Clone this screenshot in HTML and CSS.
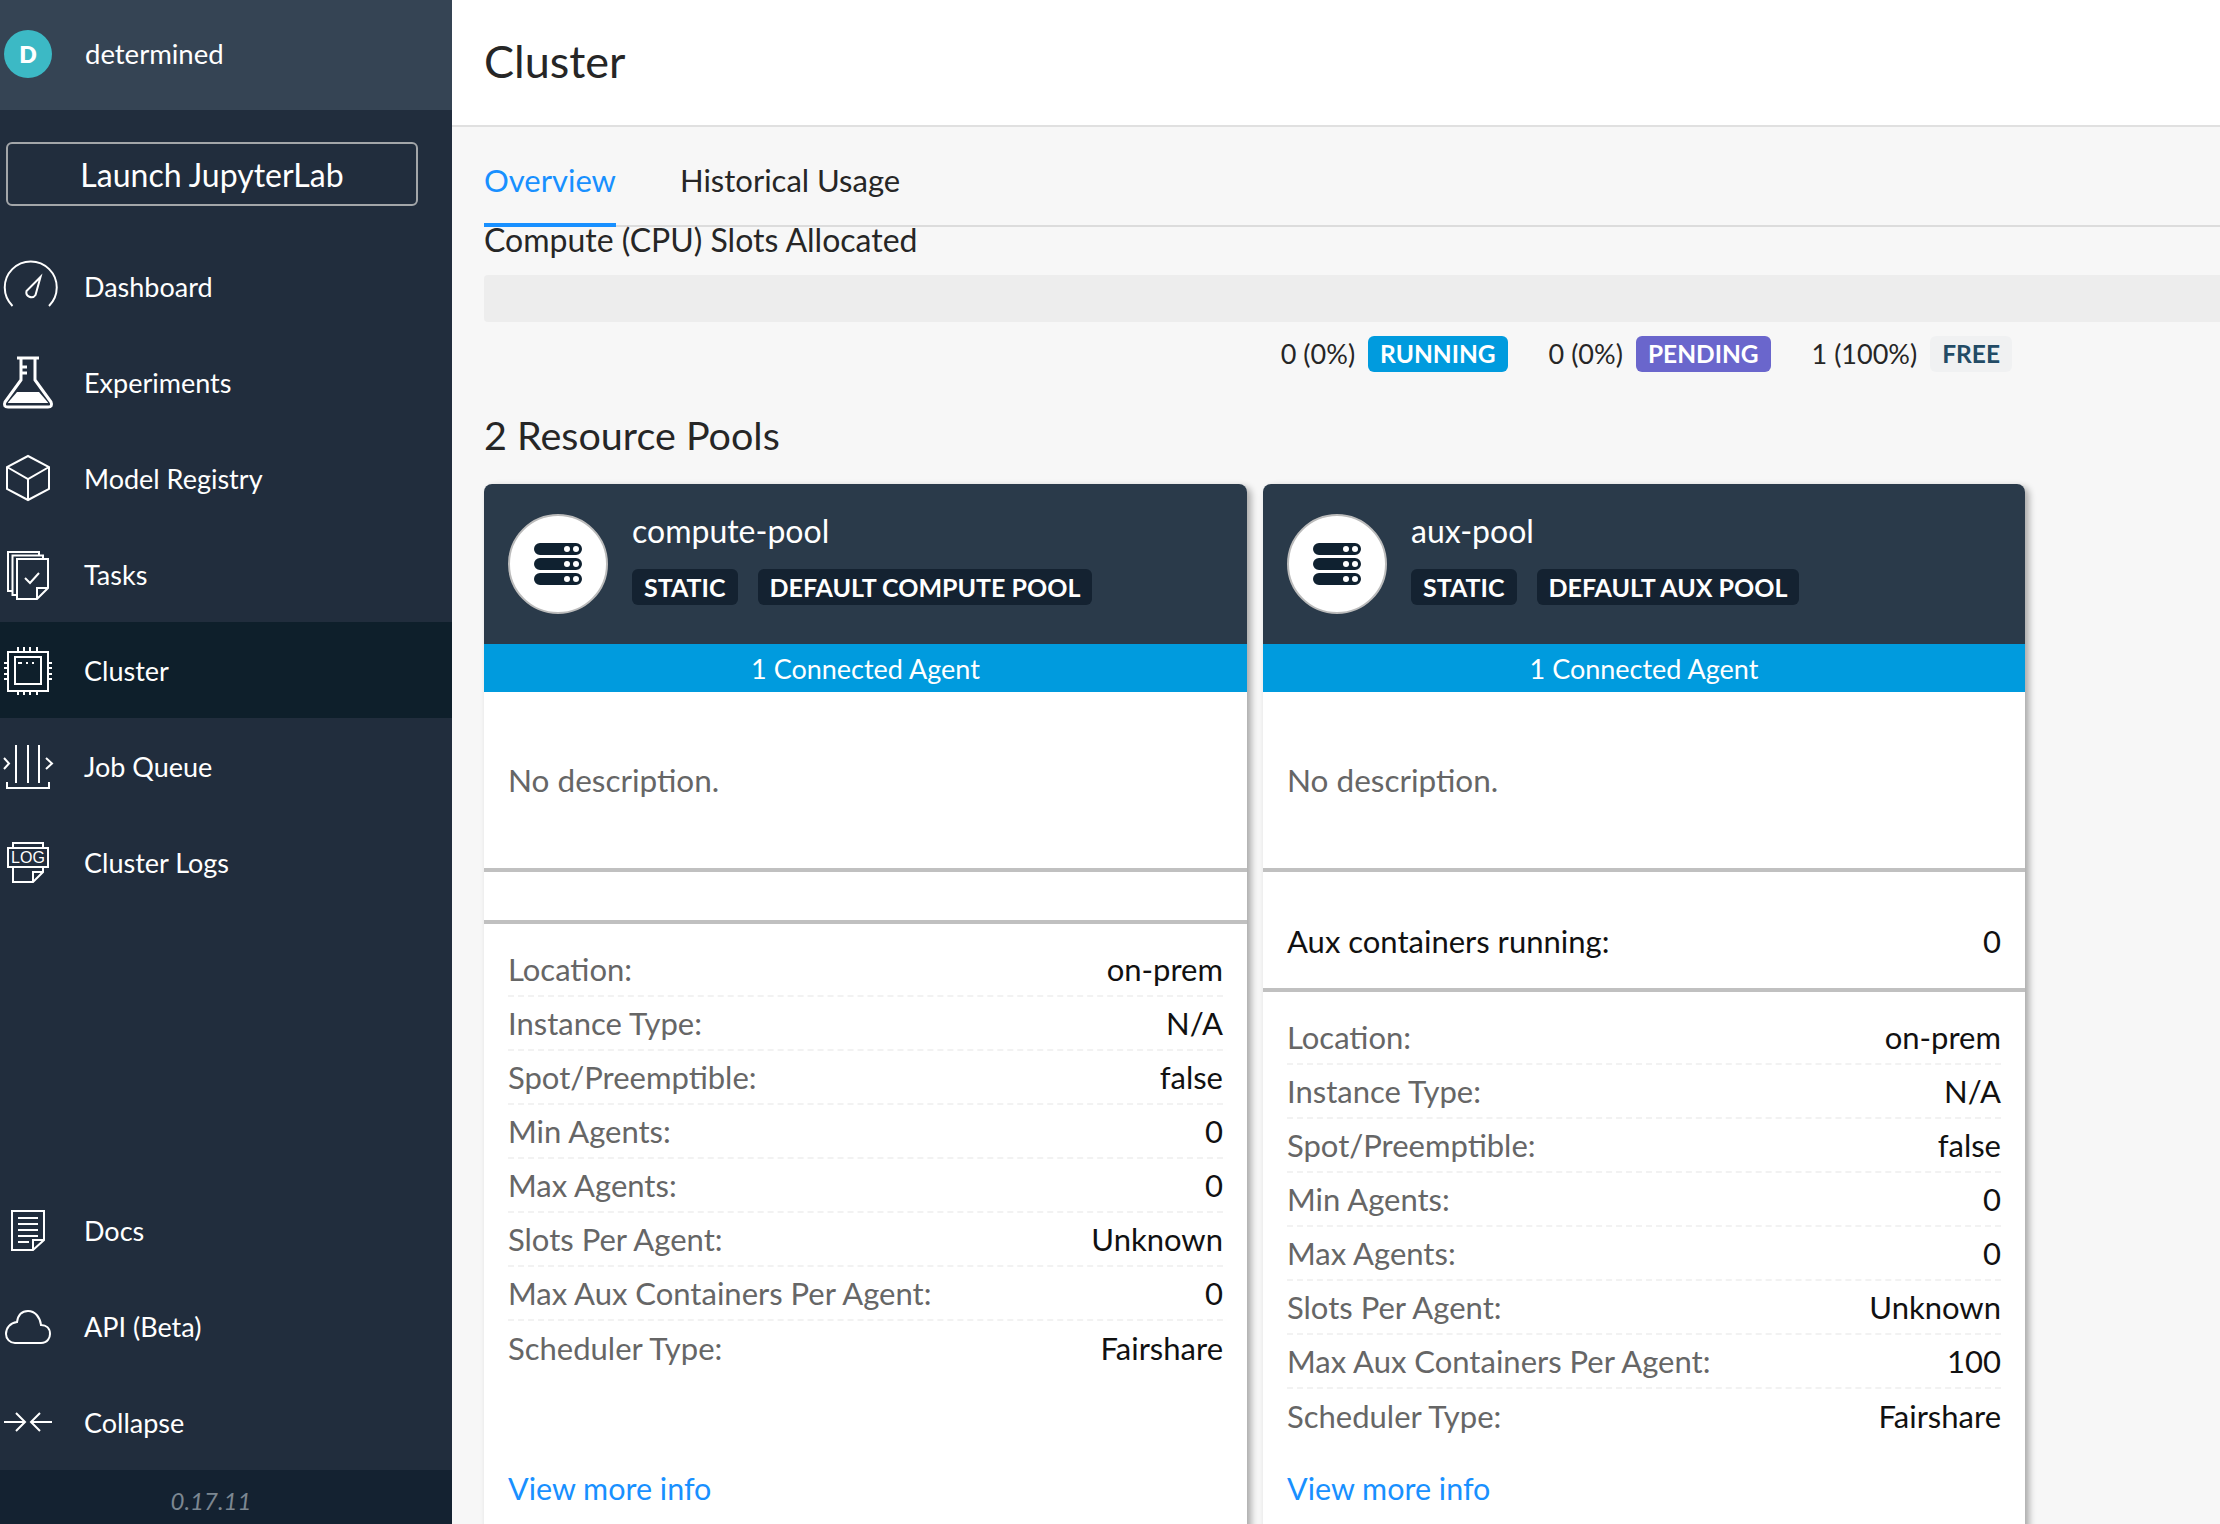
FILE: index.html
```html
<!DOCTYPE html>
<html lang="en">
<head>
    <meta charset="UTF-8">
    <title>Cluster</title>
    <link rel="stylesheet" href="styles.css">
</head>
<body>
<div class="app">
    <aside class="side">
        <div class="user"><span class="avatar">D</span><span>determined</span></div>
        <div class="launch">Launch JupyterLab</div>
        <nav class="nav">
            <a class="item"><svg viewBox="0 0 54 54"><path d="M10.500 47A26 26 0 1 1 47 47"/><path d="M38.500 18L33.500 36A5 5 0 0 1 24.500 32Z"/></svg>Dashboard</a>
            <a class="item"><svg viewBox="0 0 54 54"><path class="thick" d="M15 3H37M19 3V25L3 47Q1 52 6 52H46Q51 52 49 47L33 25V3M19 12H25M19 18H25"/><path class="solid" d="M15 37H37L46 47.500Q46 48 45 48H7Q6 48 6 47.500Z"/></svg>Experiments</a>
            <a class="item"><svg viewBox="0 0 54 54"><path d="M26 5L47 16V38L26 49L5 38V16ZM5 16L26 28L47 16M26 28V49"/></svg>Model Registry</a>
            <a class="item"><svg viewBox="0 0 54 54"><path d="M37 8V5H6V44H10M41 12V8.500H10.500V48H15"/><path d="M15 12H46V41L35 52H15ZM46 41H35V52M23 31L28 36L37 26"/></svg>Tasks</a>
            <a class="item active"><svg viewBox="0 0 54 54"><path d="M6 9H46V48H6ZM13 14H39V41H13ZM2 20H6M2 25H6M2 31H6M2 36H6M46 20H50M46 25H50M46 31H50M46 36H50M16 4V9M22 4V9M28 4V9M35 4V9M16 48V52M22 48V52M28 48V52M35 48V52M16 20H20M24 20H26M30 20H32"/></svg>Cluster</a>
            <a class="item"><svg viewBox="0 0 54 54"><path d="M14 6V44M26 6V44M37 6V44M5 43V49H47V43M2 19L7 24.500L2 30M44 19L50 24.500L44 30"/></svg>Job Queue</a>
            <a class="item"><svg viewBox="0 0 54 54"><path d="M11 13V8H41V13M6 13H46V32H6ZM11 32V47H31L41 37V32M41 37H31V47"/><text x="26" y="28" class="logtxt">LOG</text></svg>Cluster Logs</a>
            <div class="grow"></div>
            <a class="item"><svg viewBox="0 0 54 54"><path d="M10 8H42V37L31 47H10ZM42 37H31V47M16 15H36M16 21H36M16 27H36M16 33H36M16 39H27"/></svg>Docs</a>
            <a class="item"><svg viewBox="0 0 54 54"><path d="M13 44H39C46 44 48 38 48 35C48 29 44 26 39 26C38 18 33 12 26 12C20 12 16 16 15 23C8 24 4 29 4 35C4 40 8 44 13 44Z"/></svg>API (Beta)</a>
            <a class="item"><svg viewBox="0 0 54 54"><path d="M2 27H23M14 18L23 27L14 36M50 27H29M38 18L29 27L38 36"/></svg>Collapse</a>
        </nav>
        <div class="version">0.17.11</div>
    </aside>
    <main class="main">
        <header class="top"><h1>Cluster</h1></header>
        <div class="content">
            <div class="tabs">
                <span class="tab on">Overview</span>
                <span class="tab">Historical Usage</span>
            </div>
            <div class="slots">Compute (CPU) Slots Allocated</div>
            <div class="bar"></div>
            <div class="legend">
                <span class="leg">0 (0%)<b class="tag running">RUNNING</b></span>
                <span class="leg">0 (0%)<b class="tag pending">PENDING</b></span>
                <span class="leg">1 (100%)<b class="tag free">FREE</b></span>
            </div>
            <h2>2 Resource Pools</h2>
            <div class="cards">
                <section class="card">
                    <div class="head">
                        <span class="disc"><svg viewBox="0 0 48 42"><path class="server" d="M6 0H42A6 6 0 0 1 42 12H6A6 6 0 0 1 6 0ZM6 15H42A6 6 0 0 1 42 27H6A6 6 0 0 1 6 15ZM6 30H42A6 6 0 0 1 42 42H6A6 6 0 0 1 6 30Z"/><g class="dots"><circle cx="33" cy="6" r="3"/><circle cx="42" cy="6" r="3"/><circle cx="33" cy="21" r="3"/><circle cx="42" cy="21" r="3"/><circle cx="33" cy="36" r="3"/><circle cx="42" cy="36" r="3"/></g></svg></span>
                        <div class="headtext">
                            <div class="pool">compute-pool</div>
                            <div class="pooltags"><b>STATIC</b><b>DEFAULT COMPUTE POOL</b></div>
                        </div>
                    </div>
                    <div class="agents">1 Connected Agent</div>
                    <div class="desc">No description.</div>
                    <div class="aux empty"></div>
                    <dl class="info">
                        <div><dt>Location:</dt><dd>on-prem</dd></div>
                        <div><dt>Instance Type:</dt><dd>N/A</dd></div>
                        <div><dt>Spot/Preemptible:</dt><dd>false</dd></div>
                        <div><dt>Min Agents:</dt><dd>0</dd></div>
                        <div><dt>Max Agents:</dt><dd>0</dd></div>
                        <div><dt>Slots Per Agent:</dt><dd>Unknown</dd></div>
                        <div><dt>Max Aux Containers Per Agent:</dt><dd>0</dd></div>
                        <div><dt>Scheduler Type:</dt><dd>Fairshare</dd></div>
                    </dl>
                    <a class="more">View more info</a>
                </section>
                <section class="card">
                    <div class="head">
                        <span class="disc"><svg viewBox="0 0 48 42"><path class="server" d="M6 0H42A6 6 0 0 1 42 12H6A6 6 0 0 1 6 0ZM6 15H42A6 6 0 0 1 42 27H6A6 6 0 0 1 6 15ZM6 30H42A6 6 0 0 1 42 42H6A6 6 0 0 1 6 30Z"/><g class="dots"><circle cx="33" cy="6" r="3"/><circle cx="42" cy="6" r="3"/><circle cx="33" cy="21" r="3"/><circle cx="42" cy="21" r="3"/><circle cx="33" cy="36" r="3"/><circle cx="42" cy="36" r="3"/></g></svg></span>
                        <div class="headtext">
                            <div class="pool">aux-pool</div>
                            <div class="pooltags"><b>STATIC</b><b>DEFAULT AUX POOL</b></div>
                        </div>
                    </div>
                    <div class="agents">1 Connected Agent</div>
                    <div class="desc">No description.</div>
                    <div class="aux"><span>Aux containers running:</span><span>0</span></div>
                    <dl class="info">
                        <div><dt>Location:</dt><dd>on-prem</dd></div>
                        <div><dt>Instance Type:</dt><dd>N/A</dd></div>
                        <div><dt>Spot/Preemptible:</dt><dd>false</dd></div>
                        <div><dt>Min Agents:</dt><dd>0</dd></div>
                        <div><dt>Max Agents:</dt><dd>0</dd></div>
                        <div><dt>Slots Per Agent:</dt><dd>Unknown</dd></div>
                        <div><dt>Max Aux Containers Per Agent:</dt><dd>100</dd></div>
                        <div><dt>Scheduler Type:</dt><dd>Fairshare</dd></div>
                    </dl>
                    <a class="more">View more info</a>
                </section>
            </div>
        </div>
    </main>
</div>
</body>
</html>
```

FILE: styles.css
```css
* {box-sizing:border-box}
html, body {margin:0;height:100%;overflow:hidden}
body {font-family:"Lato", "Noto Sans", sans-serif;color:#262626;background:#f7f7f7}
.app {display:flex;height:1524px;overflow:hidden}

/* sidebar */
.side {width:452px;flex:none;background:#212d3d;color:#fff;display:flex;flex-direction:column;font-size:27px}
.user {height:110px;background:#354454;display:flex;align-items:center;gap:33px;padding:0 0 3px 4px;font-size:27.500px}
.avatar {width:48px;height:48px;border-radius:50%;background:#3cb9c5;display:flex;align-items:center;justify-content:center;font-weight:800;font-size:23px}
.launch {margin:32px 0 0 6px;width:412px;height:64px;border:2px solid #a3a6a9;border-radius:6px;display:flex;align-items:center;justify-content:center;font-size:32px}
.nav {flex:1;display:flex;flex-direction:column;padding-top:32px}
.grow {flex:1}
.item {height:96px;display:flex;align-items:center;gap:28px;padding-left:2px;flex:none}
.item.active {background:#0e1f2b}
.item svg {width:54px;height:54px;flex:none;overflow:visible}
.item svg path {fill:none;stroke:#fff;stroke-width:2}
.item svg path.thick {stroke-width:3}
.item svg path.solid {fill:#fff;stroke:none}
.logtxt {font-size:16px;fill:#fff;text-anchor:middle;font-family:"Liberation Sans", sans-serif}
.version {height:54px;background:#142231;color:#7c8791;font-style:italic;font-size:24px;display:flex;align-items:center;justify-content:center;padding:6px 30px 0 0}

/* main */
.main {flex:1;min-width:0}
.top {height:127px;background:#fff;border-bottom:2px solid #e0e0e0;padding:35px 0 0 32px}
.top h1 {margin:0;font-size:45px;font-weight:400;line-height:52px}
.content {padding:0 0 0 32px}
.tabs {display:flex;gap:64px;height:100px;border-bottom:2px solid #dcdcdc;font-size:31px}
.tab {height:100px;padding-top:33px;line-height:40px}
.tab.on {color:#1890ff;border-bottom:4px solid #1890ff}
.slots {font-size:32px;line-height:26px;height:30px}
.bar {margin-top:18px;height:47px;background:#ededed;border-radius:4px 0 0 4px}
.legend {display:flex;width:1528px;justify-content:flex-end;gap:41px;margin-top:14px;height:36px;font-size:27px;align-items:center}
.leg {display:flex;align-items:center;gap:13px;line-height:32px}
.tag {height:36px;padding:0 12px;border-radius:6px;font-size:24.500px;display:flex;align-items:center;color:#fff}
.running {background:#009bde}
.pending {background:#6a66cc}
.free {background:#f0f1f2;color:#234b65}
h2 {margin:40px 0 0;font-size:39.500px;font-weight:400;line-height:46px;height:72px}
.cards {display:flex;gap:16px;align-items:flex-start}
.card {width:763px;height:1100px;background:#fff;border-radius:8px 8px 0 0;box-shadow:4px 3px 7px rgba(0,0,0,.32);flex:none;display:flex;flex-direction:column}
.card + .card {width:762px}
.head {height:160px;flex:none;background:#2a3a4a;border-radius:8px 8px 0 0;display:flex;align-items:center;gap:24px;padding-left:24px;color:#fff}
.headtext {padding-bottom:12px}
.disc {width:100px;height:100px;background:#fff;border:2px solid #bbb;border-radius:50%;display:flex;align-items:center;justify-content:center;flex:none}
.disc svg {width:48px;height:42px}
.server {fill:#0f2130}
.dots {fill:#fff}
.pool {font-size:32px;line-height:40px}
.pooltags {display:flex;gap:20px;margin-top:18px}
.pooltags b {background:#142231;padding:0 12px;height:36px;border-radius:6px;font-size:25px;display:flex;align-items:center}
.agents {height:48px;flex:none;background:#009bde;color:#fff;font-size:27px;display:flex;align-items:center;justify-content:center}
.desc {height:180px;flex:none;border-bottom:4px solid #c0c0c0;padding:0 24px;display:flex;align-items:center;font-size:31.500px;color:#666}
.aux {height:120px;flex:none;border-bottom:4px solid #c0c0c0;padding:22px 24px 0;display:flex;justify-content:space-between;align-items:center;font-size:31px;color:#111}
.aux.empty {height:52px;padding-top:0}
.info {margin:0;padding:19px 24px 0}
.info div {display:flex;justify-content:space-between;height:54px;align-items:center;border-bottom:2px dashed #f2f2f2;font-size:31px}
.info div:last-child {border-bottom:0}
.info dt {color:#666}
.info dd {margin:0;color:#111}
.more {display:block;margin-top:auto;margin-bottom:76px;padding:0 24px;color:#1890ff;font-size:30.500px;line-height:40px}
```
